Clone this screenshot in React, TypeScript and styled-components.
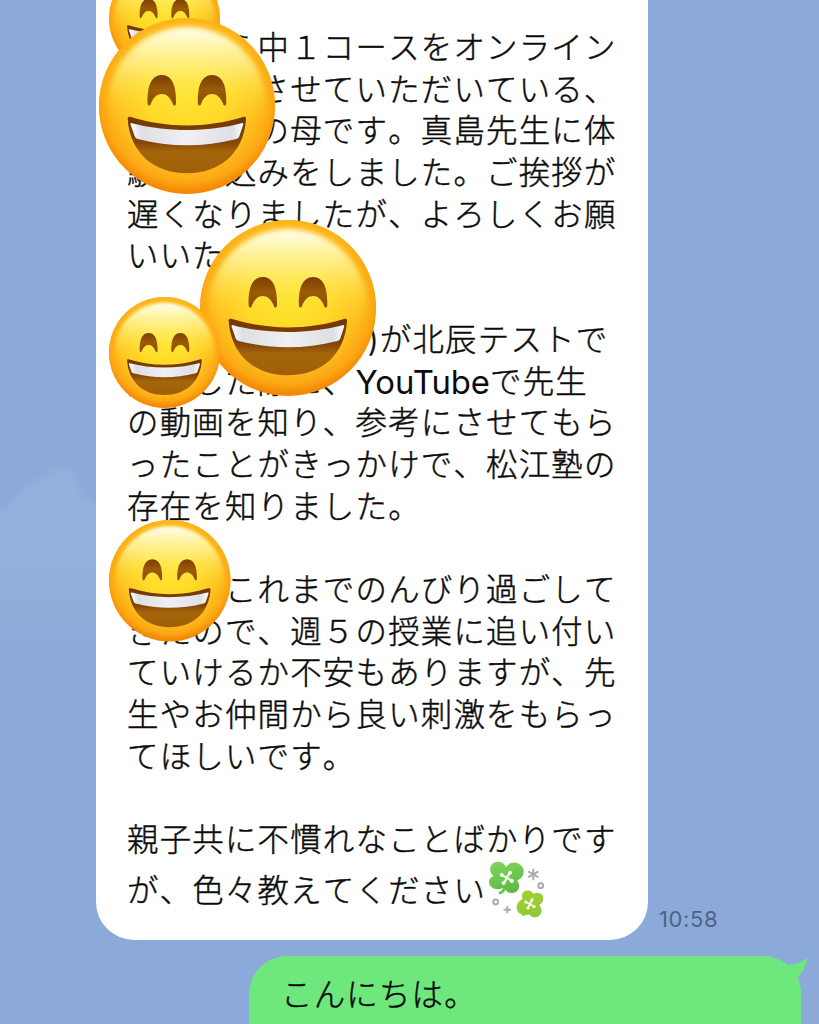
import React from 'react';
import styled, { createGlobalStyle } from 'styled-components';

const GlobalStyle = createGlobalStyle`
  * { box-sizing: border-box; }
  body { margin: 0; overflow: hidden; }
`;

const Chat = styled.main`
  position: relative;
  display: flex;
  flex-direction: column;
  width: 819px;
  height: 1024px;
  overflow: hidden;
  background: #8caad9;
  font-family: Inter, 'Noto Sans CJK JP', sans-serif;
  color: #0c0c0c;
`;

const Cloud = styled.svg`
  position: absolute;
  left: 0;
  top: 440px;
`;

const IncomingRow = styled.div`
  position: relative;
  display: flex;
  align-items: flex-end;
  gap: 11px;
  height: 940px;
  padding-left: 96px;
`;

const IncomingBubble = styled.div`
  width: 552px;
  height: 940px;
  padding: 28px 0 18px 31px;
  background: #fff;
  border-radius: 0 0 38px 38px;
`;

const Line = styled.p<{ $tall?: boolean }>`
  display: flex;
  align-items: center;
  height: ${(p) => (p.$tall ? 60 : 41.7)}px;
  margin: 0;
  font-size: 31.4px;
  font-weight: 300;
  font-kerning: none;
  letter-spacing: 1.25px;
  line-height: 41.7px;
  white-space: pre;
  -webkit-text-stroke: 0.45px currentColor;
`;

const Latin = styled.span`
  font-size: 32.8px;
  font-weight: 400;
  font-kerning: normal;
  letter-spacing: 0;
  -webkit-text-stroke: 0;
`;

const Time = styled.time`
  padding-bottom: 8px;
  font-size: 22px;
  line-height: 26px;
  letter-spacing: 0.6px;
  color: #4f6285;
`;

const OutgoingRow = styled.div`
  display: flex;
  justify-content: flex-end;
  margin-top: 15.5px;
  padding-right: 18px;
`;

const OutgoingBubble = styled.div`
  position: relative;
  width: 552px;
  height: 90px;
  padding: 19.5px 0 0 32px;
  background: #6ee87d;
  border-radius: 38px 38px 0 0;
`;

const Tail = styled.svg`
  position: absolute;
  right: -8px;
  top: 0;
`;

const Sticker = styled.svg<{ $x: number; $y: number; $size: number }>`
  position: absolute;
  left: ${(p) => p.$x}px;
  top: ${(p) => p.$y}px;
  width: ${(p) => p.$size}px;
  height: ${(p) => p.$size}px;
  overflow: visible;
`;

const Face = ({ x, y, size }: { x: number; y: number; size: number }) => (
  <Sticker $x={x} $y={y} $size={size} viewBox="0 0 176 176">
    <circle cx="88" cy="88" r="88" fill="url(#rim)" />
    <circle cx="88" cy="88" r="88" fill="url(#skin)" />
    <circle cx="88" cy="88" r="79" fill="url(#shine)" filter="url(#shineSoft)" />
    {[0, 50.3].map((dx) => (
      <path
        key={dx}
        transform={`translate(${dx} 0)`}
        d="M48.600 85C48 69 52 57 62.800 57S77.500 69 77 85c-.2 3-2.300 3.400-3.100 1C71 79 67.500 76 62.800 76S54.500 79 51.700 86c-.8 2.400-2.900 2-3.100-1Z"
        fill="url(#eye)"
      />
    ))}
    <path
      d="M28.700 101C28.500 99 30 98.300 32 99 69 110.300 107 110.300 144 99c2-.7 3.200 0 3 2C145 135 121 155.300 88 155.300S31 135 28.700 101Z"
      fill="url(#mouth)"
    />
    <path
      d="M33 105.200C67 114.200 109 114.200 142.500 105.200c1.500-.4 2 .2 1.600 1.700l-3.800 11.300c-.6 1.600-1.300 2.300-3 2.700-33 8.500-66 8.500-98.600 0-1.700-.4-2.400-1.100-3-2.700L31.700 106.900c-.4-1.500 0-2.100 1.300-1.700Z"
      fill="url(#teeth)"
    />
  </Sticker>
);

const FaceGradients = () => (
  <Sticker $x={0} $y={0} $size={0} aria-hidden>
    <defs>
      <linearGradient id="rim" x1="0" y1="0" x2="0" y2="1">
        <stop offset="0" stopColor="#fbb01c" />
        <stop offset="0.5" stopColor="#f99208" />
        <stop offset="1" stopColor="#f28706" />
      </linearGradient>
      <radialGradient id="skin" cx="0.5" cy="0.45" r="0.56">
        <stop offset="0" stopColor="#ffe22c" />
        <stop offset="0.4" stopColor="#ffd827" />
        <stop offset="0.7" stopColor="#fdc01e" />
        <stop offset="0.87" stopColor="#fdaa15" stopOpacity="0.9" />
        <stop offset="0.97" stopColor="#fb9d0d" stopOpacity="0" />
      </radialGradient>
      <linearGradient id="shine" x1="0" y1="0" x2="0" y2="1">
        <stop offset="0" stopColor="#fffef0" />
        <stop offset="0.1" stopColor="#fffbc4" stopOpacity="0.92" />
        <stop offset="0.25" stopColor="#fff590" stopOpacity="0.72" />
        <stop offset="0.42" stopColor="#ffec50" stopOpacity="0.38" />
        <stop offset="0.6" stopColor="#ffe22b" stopOpacity="0" />
      </linearGradient>
      <filter id="shineSoft">
        <feGaussianBlur stdDeviation="2.4" />
      </filter>
      <linearGradient id="eye" x1="0" y1="0" x2="0" y2="1">
        <stop offset="0" stopColor="#7a3f03" />
        <stop offset="0.5" stopColor="#9b5b05" />
        <stop offset="1" stopColor="#8a4c04" />
      </linearGradient>
      <linearGradient id="mouth" x1="0" y1="0" x2="0" y2="1">
        <stop offset="0" stopColor="#713602" />
        <stop offset="0.45" stopColor="#85450a" />
        <stop offset="0.62" stopColor="#a5660a" />
        <stop offset="1" stopColor="#a05f07" />
      </linearGradient>
      <linearGradient id="teeth" x1="0" y1="0" x2="1" y2="0">
        <stop offset="0" stopColor="#fff" />
        <stop offset="0.1" stopColor="#dedfe4" />
        <stop offset="0.5" stopColor="#f0f0f3" />
        <stop offset="0.9" stopColor="#dedfe4" />
        <stop offset="1" stopColor="#fff" />
      </linearGradient>
    </defs>
  </Sticker>
);

const CloverArt = styled.svg`
  margin-top: -4px;
  -webkit-text-stroke: 0;
`;

const Clover = () => (
  <CloverArt width="60" height="60" viewBox="0 0 60 60">
    <defs>
      <linearGradient id="leafA" x1="0" y1="0" x2="0.3" y2="1">
        <stop offset="0" stopColor="#83d45c" />
        <stop offset="1" stopColor="#5fbb45" />
      </linearGradient>
      <linearGradient id="leafB" x1="0" y1="0" x2="0.3" y2="1">
        <stop offset="0" stopColor="#a4cf34" />
        <stop offset="1" stopColor="#8fcb35" />
      </linearGradient>
    </defs>
    <path
      d="M7.500 16C3 12 3 6 7.500 3 12 .5 18 2 20 7c3-4 8-6 13-3 6 3 6 10 2 14-1.500 1.500-3 2-4 2 3 4 3 9-1 12-4 2.500-10 1-12-5-4 3-9 3-12.500 0C1 23 3 18 7.500 16Z"
      fill="url(#leafA)"
    />
    <path d="M18 24c1 5-1 8-4 9" stroke="#65bf49" strokeWidth="2.600" strokeLinecap="round" fill="none" />
    <g stroke="#f3ffe9" strokeWidth="2.200" strokeLinecap="round">
      <path d="M16 15 26 21M23.500 13 18 23" />
    </g>
    <g fill="#f3ffe9">
      <circle cx="15.800" cy="15" r="2" /><circle cx="25.800" cy="21" r="2" />
      <circle cx="24" cy="12.800" r="2" /><circle cx="17.500" cy="23" r="2" />
    </g>
    <path
      d="M36.500 39C35 34 37 31 41 30.500c3-.3 5.500 1 6.500 3.500 3-2 7-1.500 9 1.500 2 4 0 8-3.500 9.500 3 3 3.500 7 1 10-3 3.500-8 3-10.500-.5-4 1-9 .5-11.500-2.500-3-5-.5-11 4.500-13Z"
      fill="url(#leafB)"
    />
    <path d="M41 50c0 3-2 5-4 5" stroke="#92c934" strokeWidth="2.200" strokeLinecap="round" fill="none" />
    <path d="m40 42 8 4.500M46 40l-4 8" stroke="#fbffe5" strokeWidth="1.900" strokeLinecap="round" />
    <g fill="#fbffe5">
      <circle cx="39.800" cy="42" r="1.600" /><circle cx="48" cy="46.500" r="1.600" />
      <circle cx="46" cy="39.800" r="1.600" /><circle cx="42" cy="48" r="1.600" />
    </g>
    <g stroke="#acacb0" strokeWidth="2" strokeLinecap="round" fill="none">
      <path d="M47.300 9.500v10M42.900 11.800l8.800 5M51.700 11.800l-8.800 5M21.300 46.800v5.800M18.400 49.700h5.800" />
      <circle cx="54.700" cy="25.700" r="2.400" />
      <circle cx="9.700" cy="42" r="2.400" />
    </g>
  </CloverArt>
);

const greeting = [
  '今月から中１コースをオンライン',
  '受講参加させていただいている、',
  '生徒本人の母です。真島先生に体',
  '験申し込みをしました。ご挨拶が',
  '遅くなりましたが、よろしくお願',
  'いいたします。',
  '',
  '上の子(中学三年)が北辰テストで',
];

const story = [
  'の動画を知り、参考にさせてもら',
  'ったことがきっかけで、松江塾の',
  '存在を知りました。',
  '',
  '息子はこれまでのんびり過ごして',
  'きたので、週５の授業に追い付い',
  'ていけるか不安もありますが、先',
  '生やお仲間から良い刺激をもらっ',
  'てほしいです。',
  '',
  '親子共に不慣れなことばかりです',
];

export default function App() {
  return (
    <>
      <GlobalStyle />
      <Chat>
        <Cloud width="110" height="240" viewBox="0 0 110 240">
          <defs>
            <linearGradient id="cloudFade" x1="0" y1="0" x2="0" y2="1">
              <stop offset="0" stopColor="#9cb7e0" stopOpacity="0.45" />
              <stop offset="0.4" stopColor="#9cb7e0" stopOpacity="0.5" />
              <stop offset="1" stopColor="#9cb7e0" stopOpacity="0" />
            </linearGradient>
            <filter id="cloudSoft" x="-30%" y="-20%" width="160%" height="140%">
              <feGaussianBlur stdDeviation="3" />
            </filter>
          </defs>
          <path
            d="M-30 72 5 70 20 52 34 42 48 36 58 28 70 30 76 42 82 56 100 68 140 80V220H-30Z"
            fill="url(#cloudFade)"
            filter="url(#cloudSoft)"
          />
        </Cloud>
        <IncomingRow>
          <IncomingBubble>
            {greeting.map((text, i) => (
              <Line key={i}>{text}</Line>
            ))}
            <Line>
              受験した際に、<Latin>YouTube</Latin>で先生
            </Line>
            {story.map((text, i) => (
              <Line key={i}>{text}</Line>
            ))}
            <Line $tall>
              が、色々教えてください
              <Clover />
            </Line>
          </IncomingBubble>
          <Time>10:58</Time>
        </IncomingRow>
        <OutgoingRow>
          <OutgoingBubble>
            <Tail width="46" height="60" viewBox="0 0 46 60">
              <path d="M0 0C10 0 18 4 25 9 32 8.500 39 6 44.500 2 43 10 39.500 17 34.500 22 37 27 38 31 38 40V60H0Z" fill="#6ee87d" />
            </Tail>
            <Line>こんにちは。</Line>
          </OutgoingBubble>
        </OutgoingRow>
        <FaceGradients />
        <Face x={108.5} y={-37.5} size={111} />
        <Face x={98.7} y={18} size={176} />
        <Face x={200} y={220} size={176} />
        <Face x={108.5} y={296.5} size={111} />
        <Face x={109} y={519.5} size={121.5} />
      </Chat>
    </>
  );
}
